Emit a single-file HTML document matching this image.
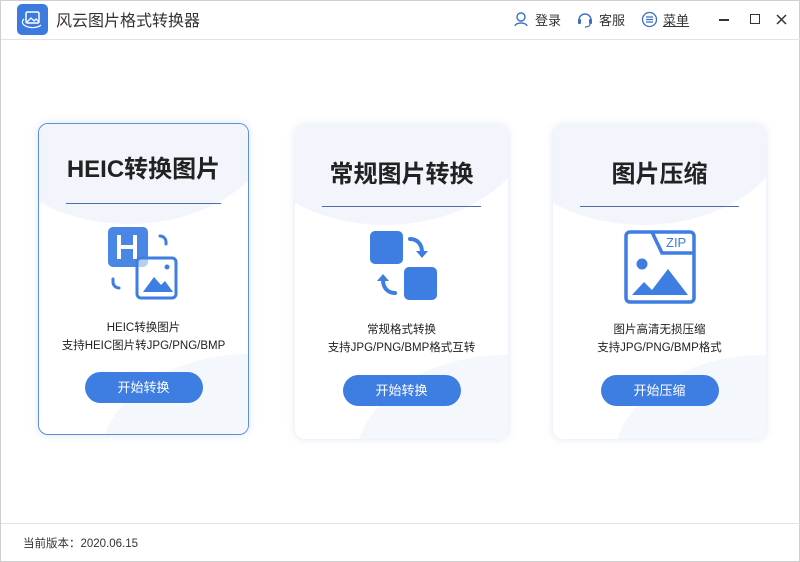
<!DOCTYPE html>
<html><head><meta charset="utf-8"><style>
*{margin:0;padding:0;box-sizing:border-box}
body{width:800px;height:562px;background:#fff;font-family:"Liberation Sans","Noto Sans CJK SC",sans-serif;position:relative;overflow:hidden;border:1px solid #cfcfcf}
.tb{position:absolute;left:0;top:0;width:800px;height:39px;border-bottom:1px solid #e3e3e3}
.logo{position:absolute;left:16px;top:3px;width:31px;height:31px;background:#3b7be0;border-radius:5px}
.title{position:absolute;left:55px;top:6px;font-size:16px;color:#333}
.tr{position:absolute;top:9px;font-size:13px;color:#333}
.card{position:absolute;background:#fff;border-radius:10px;box-shadow:0 0 8px rgba(120,150,210,.25);overflow:hidden}
.card .bg1{position:absolute;left:-60px;top:-120px;width:300px;height:220px;border-radius:50%;background:#f2f6fc}
.card .bg2{position:absolute;left:60px;top:230px;width:300px;height:220px;border-radius:50%;background:#f4f7fc}
.card h2{position:absolute;left:0;width:100%;text-align:center;font-size:24px;font-weight:bold;color:#222}
.card .ln{position:absolute;left:27px;right:27px;height:1px;background:#4a6fa8}
.card .ic{position:absolute;left:50%;margin-left:-38px;width:76px;height:76px}
.card p{position:absolute;left:0;width:100%;text-align:center;font-size:11.5px;color:#222;line-height:18px}
.card .bt{position:absolute;left:50%;margin-left:-59px;width:118px;height:31px;border-radius:16px;background:#3e7de2;color:#fff;font-size:13px;text-align:center;line-height:31px}
.ft{position:absolute;left:0;top:522px;width:800px;border-top:1px solid #e3e3e3}
</style></head><body>
<div class="tb">
<div class="logo"><svg width="31" height="31" viewBox="0 0 31 31"><rect x="9" y="8" width="13" height="11" rx="1.5" fill="none" stroke="#fff" stroke-width="1.5"/><path d="M10 18l4-4 3 3 2-2 3 3" fill="none" stroke="#fff" stroke-width="1.3"/><path d="M7 15a9 5 0 0 0 17 6" fill="none" stroke="#fff" stroke-width="1.2"/></svg></div>
<div class="title">风云图片格式转换器</div>
<svg style="position:absolute;left:512px;top:10px" width="16" height="16"><circle cx="8" cy="6" r="4" fill="none" stroke="#3a6fc4" stroke-width="1.4"/><path d="M2 15c1-4 11-4 12 0" fill="none" stroke="#3a6fc4" stroke-width="1.4"/></svg>
<div class="tr" style="left:534px">登录</div>
<svg style="position:absolute;left:576px;top:10px" width="16" height="17"><path d="M2 9a6 6 0 0 1 12 0" fill="none" stroke="#3a6fc4" stroke-width="1.4"/><rect x="1" y="8" width="3" height="5" rx="1" fill="#3a6fc4"/><rect x="12" y="8" width="3" height="5" rx="1" fill="#3a6fc4"/><path d="M13 13c0 2-2 3-5 3" fill="none" stroke="#3a6fc4" stroke-width="1.2"/></svg>
<div class="tr" style="left:598px">客服</div>
<svg style="position:absolute;left:640px;top:10px" width="17" height="17"><circle cx="8.5" cy="8.5" r="7" fill="none" stroke="#3a6fc4" stroke-width="1.3"/><path d="M5 6h7M5 8.5h7M5 11h7" stroke="#3a6fc4" stroke-width="1.2"/></svg>
<div class="tr" style="left:662px;text-decoration:underline">菜单</div>
<div style="position:absolute;left:718px;top:18px;width:10px;height:1.5px;background:#333"></div>
<div style="position:absolute;left:749px;top:13px;width:10px;height:10px;border:1.5px solid #333"></div>
<svg style="position:absolute;left:775px;top:13px" width="11" height="11"><path d="M1 1l9 9M10 1l-9 9" stroke="#333" stroke-width="1.5"/></svg>
</div>

<div class="card" style="left:37px;top:122px;width:211px;height:312px;border:1px solid #5b8fd6">
<div class="bg1"></div><div class="bg2"></div>
<h2 style="top:25px">HEIC转换图片</h2>
<div class="ln" style="top:79px"></div>
<svg class="ic" style="top:101px" viewBox="0 0 76 76"><path d="M54 11a6 6 0 0 1 6 6v2M7 54v3a6 6 0 0 0 6 6" fill="none" stroke="#3e7de2" stroke-width="3" stroke-linecap="round"/><rect x="2" y="2" width="40" height="40" rx="5" fill="#4a86e4"/><path d="M13 10v24M29 10v24M13 22h16" stroke="#fff" stroke-width="4"/><rect x="31" y="33" width="39" height="40" rx="4" fill="rgba(255,255,255,.6)" stroke="#3e7de2" stroke-width="3"/><circle cx="61" cy="42" r="2.5" fill="#3e7de2"/><path d="M37 67l11-15 7 8 4-4 8 11z" fill="#3e7de2"/></svg>
<p style="top:195px">HEIC转换图片<br>支持HEIC图片转JPG/PNG/BMP</p>
<div class="bt" style="top:248px">开始转换</div>
</div>

<div class="card" style="left:294px;top:124px;width:213px;height:314px">
<div class="bg1"></div><div class="bg2"></div>
<h2 style="top:29px">常规图片转换</h2>
<div class="ln" style="top:81px"></div>
<svg class="ic" style="top:104px" viewBox="0 0 76 76"><rect x="6" y="2" width="33" height="33" rx="5" fill="#3e7de2"/><rect x="40" y="38" width="33" height="33" rx="5" fill="#3e7de2"/><path d="M46 10c7 0 12 5 12 13" fill="none" stroke="#3e7de2" stroke-width="4" stroke-linecap="round"/><path d="M52 22l6 7 6-7z" fill="#3e7de2"/><path d="M31 64c-7 0-12-5-12-13" fill="none" stroke="#3e7de2" stroke-width="4" stroke-linecap="round"/><path d="M13 52l6-7 6 7z" fill="#3e7de2"/></svg>
<p style="top:196px">常规格式转换<br>支持JPG/PNG/BMP格式互转</p>
<div class="bt" style="top:250px">开始转换</div>
</div>

<div class="card" style="left:552px;top:124px;width:213px;height:314px">
<div class="bg1"></div><div class="bg2"></div>
<h2 style="top:29px">图片压缩</h2>
<div class="ln" style="top:81px"></div>
<svg class="ic" style="top:104px" viewBox="0 0 76 76"><rect x="4" y="3" width="68" height="70" rx="4" fill="none" stroke="#3e7de2" stroke-width="3.5"/><path d="M30 3l10 21h32" fill="none" stroke="#3e7de2" stroke-width="3.5"/><text x="44" y="18" font-family="Liberation Sans" font-size="13" fill="#3e7de2">ZIP</text><circle cx="20" cy="35" r="5.5" fill="#3e7de2"/><path d="M10 66l12-13 8 8 16-21 20 26z" fill="#3e7de2"/></svg>
<p style="top:196px">图片高清无损压缩<br>支持JPG/PNG/BMP格式</p>
<div class="bt" style="top:250px">开始压缩</div>
</div>

<div class="ft"></div>
<div style="position:absolute;left:22px;top:534px;font-size:11.5px;color:#333">当前版本：2020.06.15</div>
</body></html>
